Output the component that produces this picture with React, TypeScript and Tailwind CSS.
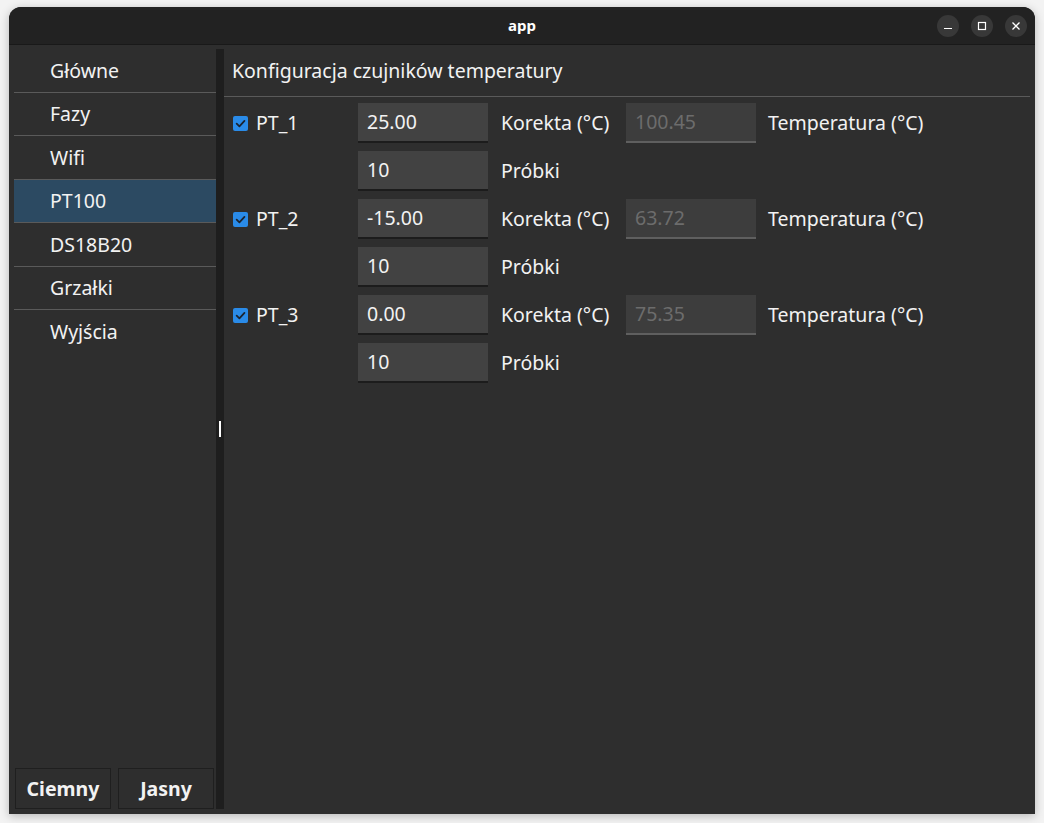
import React from "react";

const font = { fontFamily: '"Noto Sans", "DejaVu Sans", sans-serif' };

const navItems = ["Główne", "Fazy", "Wifi", "PT100", "DS18B20", "Grzałki", "Wyjścia"];

const sensors = [
  { name: "PT_1", correction: "25.00", temp: "100.45", samples: "10" },
  { name: "PT_2", correction: "-15.00", temp: "63.72", samples: "10" },
  { name: "PT_3", correction: "0.00", temp: "75.35", samples: "10" },
];

const CheckBox: React.FC = () => (
  <span className="flex h-[15px] w-[15px] items-center justify-center rounded-[2px] bg-[#2a8be8]">
    <svg width="11" height="11" viewBox="0 0 10 10" fill="none">
      <path d="M1.5 5.2 L4 7.6 L8.6 2.6" stroke="#1b2430" strokeWidth="1.6" strokeLinecap="round" strokeLinejoin="round" />
    </svg>
  </span>
);

const Field: React.FC<{ value: string; disabled?: boolean }> = ({ value, disabled }) => (
  <div
    className={
      disabled
        ? "flex h-[40px] w-[130px] items-center border-b-2 border-[#5f5f5f] bg-[#3d3d3d] pl-[9px] text-[#6c6c6c]"
        : "flex h-[40px] w-[130px] items-center border-b-2 border-[#1c1c1c] bg-[#424242] pl-[9px] text-[#f2f2f2]"
    }
  >
    {value}
  </div>
);

const WinButton: React.FC<{ children: React.ReactNode }> = ({ children }) => (
  <div className="flex h-[22px] w-[22px] items-center justify-center rounded-full bg-[#383838]">{children}</div>
);

export default function App() {
  return (
    <div className="h-[823px] w-[1044px] bg-[#f3f3f3] pl-[9px] pt-[7px]" style={font}>
      <div className="flex h-[807px] w-[1026px] flex-col overflow-hidden rounded-t-[12px] bg-[#2e2e2e] shadow-[0_2px_10px_rgba(0,0,0,0.25)]">
        {/* title bar */}
        <div className="relative flex h-[38px] shrink-0 items-center justify-center border-b border-[#191919] bg-[#222222]">
          <span className="text-[15px] font-bold text-white">app</span>
          <div className="absolute right-[8px] top-[8px] flex gap-[12px]">
            <WinButton>
              <svg width="10" height="10" viewBox="0 0 10 10">
                <path d="M1 7.5 H9" stroke="#fff" strokeWidth="1.2" />
              </svg>
            </WinButton>
            <WinButton>
              <svg width="10" height="10" viewBox="0 0 10 10" fill="none">
                <rect x="1.5" y="1.5" width="7" height="7" stroke="#fff" strokeWidth="1.2" />
              </svg>
            </WinButton>
            <WinButton>
              <svg width="10" height="10" viewBox="0 0 10 10">
                <path d="M1.5 1.5 L8.5 8.5 M8.5 1.5 L1.5 8.5" stroke="#fff" strokeWidth="1.3" />
              </svg>
            </WinButton>
          </div>
        </div>

        {/* body */}
        <div className="flex flex-1 pb-[5px] pt-[4px] text-[19.5px] text-[#f2f2f2]">
          <aside className="flex w-[207px] flex-col pl-[5px]">
            <nav className="flex flex-col">
              {navItems.map((item, i) => (
                <div
                  key={item}
                  className={
                    (item === "PT100" ? "bg-[#2c4a62] " : "") +
                    (i < navItems.length - 1 ? "border-b border-[#5a5a5a] " : "") +
                    "flex h-[43.5px] items-center pl-[36px]"
                  }
                >
                  {item}
                </div>
              ))}
            </nav>
            <div className="flex-1" />
            <div className="flex gap-[7px] pl-px pr-[2px]">
              <button className="flex h-[41px] w-[96px] items-center justify-center border border-[#1f1f1f] bg-[#2e2e2e] font-bold">
                Ciemny
              </button>
              <button className="flex h-[41px] w-[96px] items-center justify-center border border-[#1f1f1f] bg-[#2e2e2e] font-bold">
                Jasny
              </button>
            </div>
          </aside>

          {/* splitter */}
          <div className="flex w-[8px] items-center justify-center bg-[#1e1e1e]">
            <div className="h-[16px] w-[2px] bg-white" />
          </div>

          <main className="flex flex-1 flex-col pr-[5px]">
            <div className="flex h-[48px] items-center border-b border-[#5a5a5a] pb-[3px] pl-[8px]">
              Konfiguracja czujników temperatury
            </div>
            <div className="grid grid-cols-[126px_130px_138px_130px_1fr] gap-y-[8px] pl-[8px] pt-[6px]">
              {sensors.map((s) => (
                <React.Fragment key={s.name}>
                  <div className="flex items-center gap-[8px] pl-px">
                    <CheckBox />
                    <span>{s.name}</span>
                  </div>
                  <Field value={s.correction} />
                  <div className="flex items-center pl-[13px]">Korekta (°C)</div>
                  <Field value={s.temp} disabled />
                  <div className="flex items-center pl-[12px]">Temperatura (°C)</div>

                  <div />
                  <Field value={s.samples} />
                  <div className="flex items-center pl-[13px]">Próbki</div>
                  <div />
                  <div />
                </React.Fragment>
              ))}
            </div>
          </main>
        </div>
      </div>
    </div>
  );
}
